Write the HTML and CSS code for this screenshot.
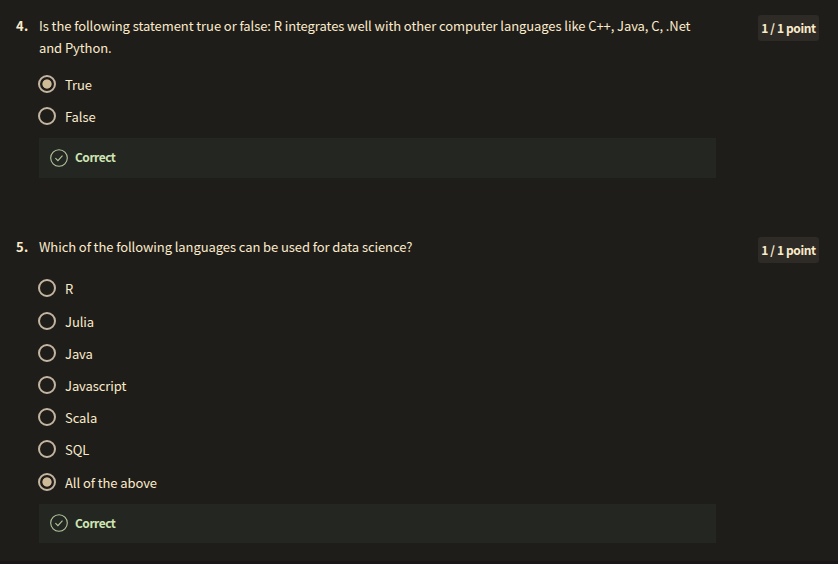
FILE: index.html
```html
<!DOCTYPE html>
<html lang="en">
<head>
<meta charset="utf-8">
<title>Quiz</title>
<link rel="stylesheet" href="styles.css">
</head>
<body>
<main class="quiz">
  <section class="question">
    <div class="number">4.</div>
    <div class="body">
      <p class="prompt">Is the following statement true or false: R integrates well with other computer languages like C++, Java, C, .Net<br>and Python.</p>
      <ul class="options">
        <li class="option"><span class="radio checked"></span><span class="label">True</span></li>
        <li class="option"><span class="radio"></span><span class="label">False</span></li>
      </ul>
      <div class="feedback">
        <svg class="check" viewBox="0 0 18 18"><circle cx="9" cy="9" r="8.3"/><path d="M5.4 9.2l2.5 2.4 4.6-5"/></svg>
        <span class="verdict">Correct</span>
      </div>
    </div>
    <div class="points"><span>1 / 1 point</span></div>
  </section>
  <section class="question second">
    <div class="number">5.</div>
    <div class="body">
      <p class="prompt">Which of the following languages can be used for data science?</p>
      <ul class="options">
        <li class="option spaced"><span class="radio"></span><span class="label">R</span></li>
        <li class="option"><span class="radio"></span><span class="label">Julia</span></li>
        <li class="option"><span class="radio"></span><span class="label">Java</span></li>
        <li class="option"><span class="radio"></span><span class="label">Javascript</span></li>
        <li class="option"><span class="radio"></span><span class="label">Scala</span></li>
        <li class="option spaced"><span class="radio"></span><span class="label">SQL</span></li>
        <li class="option"><span class="radio checked"></span><span class="label">All of the above</span></li>
      </ul>
      <div class="feedback">
        <svg class="check" viewBox="0 0 18 18"><circle cx="9" cy="9" r="8.3"/><path d="M5.4 9.2l2.5 2.4 4.6-5"/></svg>
        <span class="verdict">Correct</span>
      </div>
    </div>
    <div class="points"><span>1 / 1 point</span></div>
  </section>
</main>
</body>
</html>
```
FILE: styles.css
```css
* { box-sizing: border-box; margin: 0; padding: 0; }
body {
  height: 564px;
  overflow: hidden;
  background: #1f1d1a;
  color: #fbebcb;
  font: 13px/22px "Noto Sans CJK SC", "Noto Sans", sans-serif;
  letter-spacing: -0.08px;
}
.quiz { height: 564px; padding: 15px 19px 0 16px; border-bottom: 3px solid #1b1718; }
.question {
  display: grid;
  grid-template-columns: 23px 677px 61px;
  justify-content: start;
  height: 222px;
}
.question.second { height: 320px; }
.number { font-weight: 700; letter-spacing: 0.4px; }
.prompt { white-space: nowrap; }
.second .prompt, .second .number { margin-top: -1px; }
.options { list-style: none; padding-top: 9px; }
.second .options { padding-top: 14px; }
.option { display: flex; align-items: center; height: 32px; margin-left: -1px; }
.option.spaced { margin-bottom: 1px; }
.radio {
  width: 18px;
  height: 18px;
  border: 2px solid #c3b5a0;
  border-radius: 50%;
  margin-right: 9px;
}
.radio.checked { background: radial-gradient(circle, #d0bb98 4.2px, transparent 5px); }
.label { padding-top: 1px; }
.feedback {
  display: flex;
  align-items: center;
  height: 40px;
  margin-top: 6px;
  padding-left: 11px;
  background: #242721;
}
.second .feedback { height: 39px; }
.check { width: 18px; height: 18px; margin-right: 7px; fill: none; stroke: #b4c69f; stroke-width: 1.1; }
.second .check { margin-top: -1px; }
.verdict { margin-top: -2px; color: #cfe5b5; font-weight: 700; font-size: 12px; letter-spacing: -0.5px; }
.second .verdict { margin-top: -1px; }
.points {
  margin-left: 42px;
  width: 61px;
  height: 26px;
  background: #2e2b26;
  border-radius: 3px;
  text-align: center;
  font-size: 12px;
  font-weight: 700;
  letter-spacing: -0.38px;
  line-height: 26px;
  white-space: nowrap;
}
```
